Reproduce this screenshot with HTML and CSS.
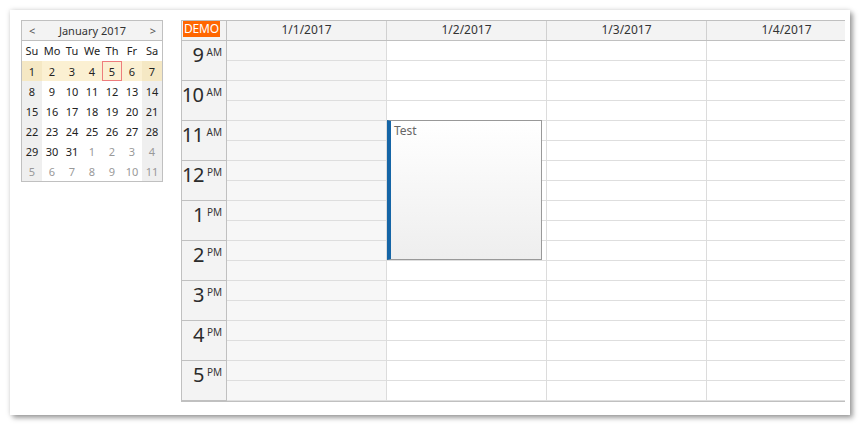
FILE: index.html
```html
<!DOCTYPE html>
<html>
<head>
<meta charset="utf-8">
<title>Calendar</title>
<link rel="stylesheet" href="styles.css">
</head>
<body>
<div class="panel">
  <div class="nav">
    <div class="nav-title"><span class="nav-arrow">&lt;</span><span class="nav-month">January 2017</span><span class="nav-arrow">&gt;</span></div>
    <div class="nav-grid">
      <div class="dn">Su</div><div class="dn">Mo</div><div class="dn">Tu</div><div class="dn">We</div><div class="dn">Th</div><div class="dn">Fr</div><div class="dn">Sa</div>
      <div class="d cur we">1</div><div class="d cur">2</div><div class="d cur">3</div><div class="d cur">4</div><div class="d cur today">5</div><div class="d cur">6</div><div class="d cur we">7</div>
      <div class="d we">8</div><div class="d">9</div><div class="d">10</div><div class="d">11</div><div class="d">12</div><div class="d">13</div><div class="d we">14</div>
      <div class="d we">15</div><div class="d">16</div><div class="d">17</div><div class="d">18</div><div class="d">19</div><div class="d">20</div><div class="d we">21</div>
      <div class="d we">22</div><div class="d">23</div><div class="d">24</div><div class="d">25</div><div class="d">26</div><div class="d">27</div><div class="d we">28</div>
      <div class="d we">29</div><div class="d">30</div><div class="d">31</div><div class="d oth">1</div><div class="d oth">2</div><div class="d oth">3</div><div class="d oth we">4</div>
      <div class="d oth we">5</div><div class="d oth">6</div><div class="d oth">7</div><div class="d oth">8</div><div class="d oth">9</div><div class="d oth">10</div><div class="d oth we">11</div>
    </div>
  </div>
  <div class="cal">
    <div class="cal-head">
      <div class="corner"><span class="demo">DEMO</span></div>
      <div class="colhead">1/1/2017</div>
      <div class="colhead">1/2/2017</div>
      <div class="colhead">1/3/2017</div>
      <div class="colhead">1/4/2017</div>
    </div>
    <div class="cal-body">
      <div class="times">
        <div class="hour"><span class="hn">9</span><span class="ap">AM</span></div>
        <div class="hour"><span class="hn">10</span><span class="ap">AM</span></div>
        <div class="hour"><span class="hn">11</span><span class="ap">AM</span></div>
        <div class="hour"><span class="hn">12</span><span class="ap">PM</span></div>
        <div class="hour"><span class="hn">1</span><span class="ap">PM</span></div>
        <div class="hour"><span class="hn">2</span><span class="ap">PM</span></div>
        <div class="hour"><span class="hn">3</span><span class="ap">PM</span></div>
        <div class="hour"><span class="hn">4</span><span class="ap">PM</span></div>
        <div class="hour"><span class="hn">5</span><span class="ap">PM</span></div>
      </div>
      <div class="day day-off"></div>
      <div class="day">
        <div class="event"><span class="event-text">Test</span></div>
      </div>
      <div class="day"></div>
      <div class="day"></div>
    </div>
  </div>
</div>
</body>
</html>
```
FILE: styles.css
```css
html, body {
  margin: 0;
  padding: 0;
  background: #fff;
}

body {
  font-family: "Noto Sans", "Open Sans", sans-serif;
  color: #333;
}

.panel {
  margin: 10px;
  width: 840px;
  height: 405px;
  box-sizing: border-box;
  padding: 10px 0 0 11px;
  display: flex;
  align-items: flex-start;
  gap: 18px;
  background: #fff;
  box-shadow: 3px 3px 5px rgba(0, 0, 0, 0.35), 0 0 5px rgba(0, 0, 0, 0.15);
  overflow: hidden;
}

/* Navigator */
.nav {
  width: 142px;
  border: 1px solid #c0c0c0;
  box-sizing: border-box;
  font-size: 11px;
}

.nav-title {
  height: 20px;
  box-sizing: border-box;
  border-bottom: 1px solid #c0c0c0;
  background: #f3f3f3;
  display: flex;
  align-items: center;
  justify-content: space-between;
  padding: 0 6px 0 7px;
  color: #333;
}

.nav-arrow {
  color: #555;
  font-size: 11px;
}

.nav-month {
  color: #333;
}

.nav-grid {
  display: grid;
  grid-template-columns: repeat(7, 20px);
  grid-auto-rows: 20px;
}

.nav-grid .dn {
  height: 19px;
  display: flex;
  align-items: center;
  justify-content: center;
  color: #222;
}

.d {
  display: flex;
  align-items: center;
  justify-content: center;
  color: #222;
  box-sizing: border-box;
}

.d.we {
  background: #efefef;
}

.d.cur {
  background: #fbf0d2;
}

.d.cur.we {
  background: #f5e8c4;
}

.d.oth {
  color: #999;
}

.d.today {
  border: 1px solid #ee7d7d;
}

/* Calendar */
.cal {
  width: 664px;
  overflow: hidden;
  border-left: 1px solid #c0c0c0;
  border-top: 1px solid #c0c0c0;
  border-bottom: 1px solid #c0c0c0;
  box-sizing: border-box;
}

.cal-head {
  display: grid;
  grid-template-columns: 45px repeat(4, 160px);
  height: 20px;
  box-sizing: border-box;
  border-bottom: 1px solid #c0c0c0;
  background: #f3f3f3;
}

.corner {
  border-right: 1px solid #c0c0c0;
  display: flex;
  align-items: flex-start;
  padding: 0 0 0 1px;
}

.demo {
  background: #ff6600;
  color: #fff;
  font-size: 12px;
  line-height: 16px;
  height: 16px;
  padding: 0 1px;
  letter-spacing: -0.2px;
}

.colhead {
  border-right: 1px solid #d0d0d0;
  font-size: 12px;
  line-height: 18px;
  text-align: center;
  color: #333;
}

.cal-body {
  display: grid;
  grid-template-columns: 45px repeat(4, 160px);
}

.times {
  border-right: 1px solid #c0c0c0;
  background: #f3f3f3;
}

.hour {
  height: 40px;
  box-sizing: border-box;
  border-bottom: 1px solid #c0c0c0;
  display: flex;
  justify-content: flex-end;
  align-items: flex-start;
  padding-right: 4px;
}

.hn {
  font-size: 20px;
  line-height: 27px;
  letter-spacing: -0.5px;
  color: #2b2b2b;
}

.ap {
  font-size: 10px;
  line-height: 14px;
  margin-top: 4px;
  margin-left: 3px;
  color: #333;
}

.day {
  position: relative;
  height: 360px;
  border-right: 1px solid #dcdcdc;
  background-color: #fff;
  background-image: repeating-linear-gradient(to bottom, transparent 0, transparent 19px, #dedede 19px, #dedede 20px);
}

.day-off {
  background-color: #f7f7f7;
}

.event {
  position: absolute;
  left: 0;
  top: 79px;
  width: 155px;
  height: 140px;
  box-sizing: border-box;
  border: 1px solid #999;
  border-left: 4px solid #1565a6;
  background: linear-gradient(to bottom, #ffffff, #eeeeee);
  padding: 1px 0 0 3px;
  line-height: 14px;
}

.event-text {
  font-size: 12px;
  color: #666;
}
```
